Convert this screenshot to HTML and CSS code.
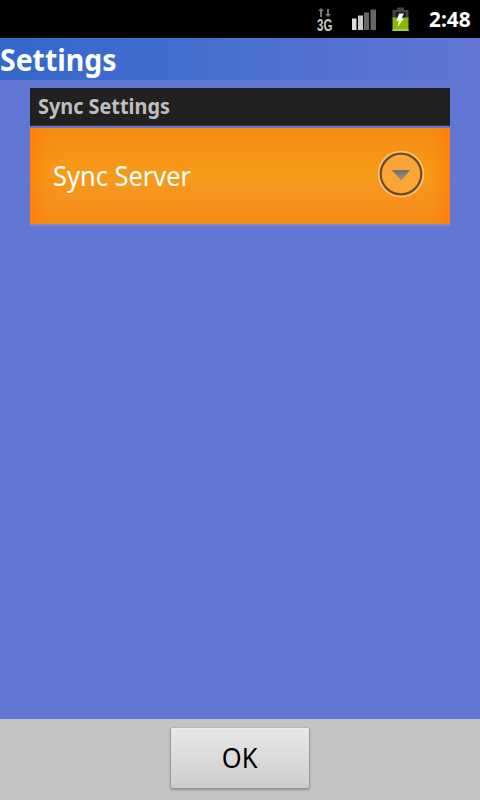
FILE: index.html
```html
<!DOCTYPE html>
<html lang="en">
<head>
<meta charset="utf-8">
<title>Settings</title>
<link rel="stylesheet" href="styles.css">
</head>
<body>
<div class="screen">
  <div class="status">
    <div class="network">
      <svg width="16" height="10" viewBox="0 0 16 10"><path d="M4 0L7 3H5V9H3V3H1ZM11 9L8 6H10V1H12V6H14Z" fill="#777"/></svg>
      <span class="network-label">3G</span>
    </div>
    <svg class="signal" width="26" height="24" viewBox="0 0 26 24"><path d="M1 11.500H5.500V23H1Z" fill="#ddd"/><path d="M7 8.500H12V23H7Z" fill="#ccc"/><path d="M13 5.500H18V23H13ZM19.500 2.500H25V23H19.500Z" fill="#666"/></svg>
    <svg class="battery" width="20" height="26" viewBox="0 0 20 26"><path d="M6 0.500H13V3H17.500V12H1.500V3H6Z" fill="#444"/><path d="M4.500 5H14.500V11H4.500Z" fill="#161616"/><path d="M1.500 10.500H17.500V24H1.500Z" fill="#86b900"/><path d="M1.500 22H17.500V24H1.500Z" fill="#a5cf35"/><path d="M8 6.500H13L10.500 11.500H13L6.500 20L8 14H5.500Z" fill="#fff"/></svg>
    <span class="clock">2:48</span>
  </div>
  <h1 class="title"><span class="title-text">Settings</span></h1>
  <main class="content">
    <h2 class="category"><span class="category-text">Sync Settings</span></h2>
    <div class="item">
      <span class="item-text">Sync Server</span>
      <svg class="more" width="48" height="48" viewBox="0 0 48 48"><defs><linearGradient id="arrow" x2="0" y2="1"><stop stop-color="#6f6f6f"/><stop offset="1" stop-color="#999083"/></linearGradient></defs><circle cx="24" cy="24" r="22" fill="#faa536" stroke="#fbc17a" stroke-width="2.400"/><circle cx="24" cy="24" r="20.300" fill="none" stroke="#704b1c" stroke-width="2.200"/><path d="M15 20H33L24 30.500Z" fill="url(#arrow)"/></svg>
    </div>
  </main>
  <footer class="footer"><button class="ok"><span class="ok-text">OK</span></button></footer>
</div>
</body>
</html>
```
FILE: styles.css
```css
* { box-sizing: border-box; }
body { margin: 0; }
.screen {
  display: flex; flex-direction: column;
  width: 480px; height: 800px; overflow: hidden;
  background: #6276d3;
  font-family: "Noto Sans", "Open Sans", sans-serif;
}
.status {
  display: flex; align-items: flex-start;
  height: 38px; background: #000; color: #fff;
}
.network { display: flex; flex-direction: column; width: 16px; margin: 8px 0 0 317px; }
.network-label {
  font: bold 16px/15px "Liberation Sans", sans-serif; color: #c8c8c8;
  transform: scaleX(.72); transform-origin: left;
}
.signal { margin: 7px 0 0 18px; }
.battery { margin: 7px 0 0 14px; }
.clock {
  margin-left: 18px; font-size: 21px; font-weight: 700; line-height: 38px;
  white-space: nowrap; transform: scaleX(.99); transform-origin: left;
}
.title {
  height: 42px; margin: 0; color: #fff;
  background: linear-gradient(90deg, #3268ca, #496fd2 50%, #6276d3);
  font-size: 30px; line-height: 43px; font-weight: 700;
}
.title-text, .category-text, .item-text, .ok-text {
  display: inline-block; white-space: nowrap; transform-origin: left;
}
.title-text { transform: scaleX(.947); }
.content { flex: 1; padding: 8px 30px 0; }
.category {
  height: 38px; margin: 0 0 2px; padding-left: 8px;
  background: #212121; border-bottom: 1px solid #383838; color: #bebebe;
  font-size: 21px; line-height: 37px; font-weight: 700;
}
.category-text { transform: scaleX(.945); }
.item {
  display: flex; align-items: center; justify-content: space-between;
  height: 98px; padding: 0 25px 4px 23px; color: #fff;
  border-bottom: 2px solid #8188c7;
  background: linear-gradient(#f68c16, #f79a18 50%, #f79720 60%, #f68c16);
  box-shadow: inset 24px 0 24px -22px #fb7708, inset -24px 0 24px -22px #fb7708;
  font-size: 28px; line-height: 40px;
}
.item-text { transform: translateY(1px) scaleX(.908); }
.footer { display: flex; justify-content: center; height: 81px; padding-top: 9px; background: #c5c4c5; }
.ok {
  width: 138px; height: 60px; padding: 0 0 2px; border: 0; border-radius: 2px;
  background: linear-gradient(#e8e8e8, #cdcdcd);
  box-shadow: 0 1px 2px 1px #909090, inset 0 1px #eee;
  color: #000; font-family: inherit; font-size: 28px; line-height: 58px;
}
.ok-text { transform: scaleX(.91); transform-origin: center; }
```
